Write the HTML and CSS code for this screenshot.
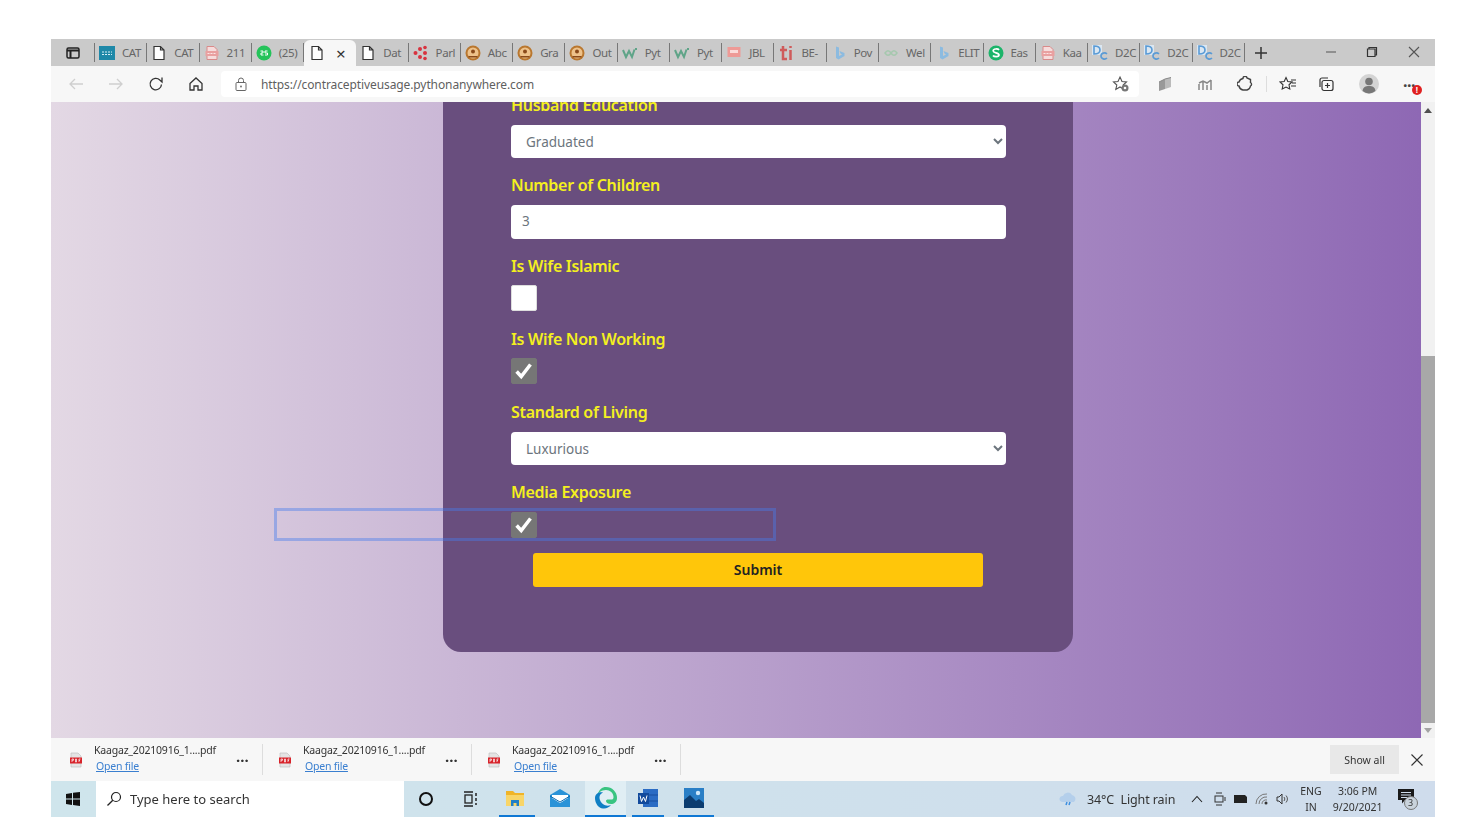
FILE: index.html
```html
<!DOCTYPE html>
<html lang="en">
<head>
  <meta charset="UTF-8" />
  <title>Contraceptive Usage</title>
  <link rel="stylesheet" href="styles.css">
</head>
<body>

  <svg class="defs" width="0" height="0">
    <symbol id="doc" viewBox="0 0 16 16"><path d="M3 1.500h6.500L13 5v9.500H3zM9.500 1.500V5H13" fill="#fff" stroke="#333" stroke-width="1.200"/></symbol>
    <symbol id="pdf" viewBox="0 0 16 16"><path d="M3 1.500h7L13 4.500v10H3z" fill="#f6dcdc" stroke="#d98a8a"/><rect x="1.500" y="6" width="13" height="5" fill="#e9a0a0"/><path d="M3.500 8.500h9" stroke="#fbe6e6" stroke-dasharray="2 1"/></symbol>
    <symbol id="face" viewBox="0 0 16 16"><circle cx="8" cy="8" r="7.500" fill="#b9772f"/><circle cx="8" cy="8" r="5.500" fill="#eec28a"/><circle cx="8" cy="6.500" r="2" fill="#8a4a1a"/><path d="M3.500 11h9v1.500h-9z" fill="#8a4a1a"/></symbol>
    <symbol id="wmark" viewBox="0 0 16 16"><path d="M1 5l3 7 3-6 3 6 2.500-7.500M14 3v2" fill="none" stroke="#5fa488" stroke-width="2"/></symbol>
    <symbol id="bing" viewBox="0 0 16 16"><path d="M5 1.500l3 1v8.500l3-1.500-1.500-1-1-2.500 5 2v3l-6 3.500-2.500-1.500z" fill="#8cbbe0"/></symbol>
    <symbol id="filepdf" viewBox="0 0 16 16"><path d="M3 1h7l3 3v11H3z" fill="#e4e4e4" stroke="#bbb" stroke-width=".6"/><rect x="2" y="5.500" width="12" height="6" fill="#d8232a"/><path d="M4 7v3M4 7h1.500v1.300H4M7.500 7v3h1V7zM11 7v3M11 7h1.500M11 8.500h1" fill="none" stroke="#fff" stroke-width=".7"/></symbol>
  </svg>

  <div class="screen">

    <div class="tabstrip">
      <div class="winbtn"><svg width="14" height="12" viewBox="0 0 14 12"><rect x="1" y="1" width="12" height="10" rx="1.500" fill="none" stroke="#222" stroke-width="1.500"/><path d="M1 3.500h12M4.500 3.500V11" stroke="#222" stroke-width="2"/></svg></div>
      <div class="tab"><svg width="16" height="16" viewBox="0 0 16 16"><rect y="1" width="16" height="14" fill="#1e88a8"/><path d="M3 7h10M3 9.500h10" stroke="#d5eef5" stroke-dasharray="2 1"/></svg><span>CAT</span></div>
      <div class="tab"><svg width="16" height="16"><use href="#doc"/></svg><span>CAT</span></div>
      <div class="tab"><svg width="16" height="16"><use href="#pdf"/></svg><span>211</span></div>
      <div class="tab"><svg width="16" height="16" viewBox="0 0 16 16"><circle cx="8" cy="8" r="7.500" fill="#25c35a"/><path d="M4.500 6h2.500v2H5v2h2.500M9 6h2.500M9 6v2h2.500v2H9" fill="none" stroke="#fff"/></svg><span>(25)</span></div>
      <div class="tab active"><svg width="16" height="16"><use href="#doc"/></svg><b>×</b></div>
      <div class="tab"><svg width="16" height="16"><use href="#doc"/></svg><span>Dat</span></div>
      <div class="tab"><svg width="16" height="16" viewBox="0 0 16 16"><g fill="#d8333f"><circle cx="2.500" cy="8" r="2"/><circle cx="7" cy="4" r="2"/><circle cx="7" cy="12" r="2"/><circle cx="12" cy="2.500" r="1.800"/><circle cx="12" cy="8" r="2"/><circle cx="12" cy="13.500" r="1.800"/></g></svg><span>Parl</span></div>
      <div class="tab"><svg width="16" height="16"><use href="#face"/></svg><span>Abc</span></div>
      <div class="tab"><svg width="16" height="16"><use href="#face"/></svg><span>Gra</span></div>
      <div class="tab"><svg width="16" height="16"><use href="#face"/></svg><span>Out</span></div>
      <div class="tab"><svg width="16" height="16"><use href="#wmark"/></svg><span>Pyt</span></div>
      <div class="tab"><svg width="16" height="16"><use href="#wmark"/></svg><span>Pyt</span></div>
      <div class="tab"><svg width="16" height="16" viewBox="0 0 16 16"><rect x="1.500" y="2" width="13" height="10" fill="#ee9a96"/><rect x="4" y="5" width="8" height="3" fill="#fbdcda"/><path d="M4 14h8" stroke="#ccc"/></svg><span>JBL</span></div>
      <div class="tab"><svg width="16" height="16" viewBox="0 0 16 16"><path d="M5 1v13h4M2 5h7M12.500 5v10M12.500 1v2" fill="none" stroke="#cf5b5b" stroke-width="2.500"/></svg><span>BE-</span></div>
      <div class="tab"><svg width="16" height="16"><use href="#bing"/></svg><span>Pov</span></div>
      <div class="tab"><svg width="16" height="16" viewBox="0 0 16 16"><path d="M2 8c2-3 4-3 6 0s4 3 6 0c-2-3-4-3-6 0s-4 3-6 0z" fill="none" stroke="#a5c8ae" stroke-width="1.500"/></svg><span>Wel</span></div>
      <div class="tab"><svg width="16" height="16"><use href="#bing"/></svg><span>ELIT</span></div>
      <div class="tab"><svg width="16" height="16" viewBox="0 0 16 16"><circle cx="8" cy="8" r="7.500" fill="#1cb46a"/><path d="M11 5c-1-1.500-6-1.500-5.800 1 .2 2.200 5.800 1.500 5.800 4 0 2.300-5 2-6 .5" fill="none" stroke="#fff" stroke-width="1.700"/></svg><span>Eas</span></div>
      <div class="tab"><svg width="16" height="16"><use href="#pdf"/></svg><span>Kaa</span></div>
      <div class="tab"><svg width="16" height="16" viewBox="0 0 16 16"><rect width="10" height="10" fill="#dbe7f2"/><path d="M2 1v8c4 0 6-1 6-4S6 1 2 1z" fill="none" stroke="#5b9bd5" stroke-width="1.600"/><path d="M15 9c-2-2-6-1-6 2s4 4 6 2" fill="none" stroke="#5b9bd5" stroke-width="1.600"/></svg><span>D2C</span></div>
      <div class="tab"><svg width="16" height="16" viewBox="0 0 16 16"><rect width="10" height="10" fill="#dbe7f2"/><path d="M2 1v8c4 0 6-1 6-4S6 1 2 1z" fill="none" stroke="#5b9bd5" stroke-width="1.600"/><path d="M15 9c-2-2-6-1-6 2s4 4 6 2" fill="none" stroke="#5b9bd5" stroke-width="1.600"/></svg><span>D2C</span></div>
      <div class="tab"><svg width="16" height="16" viewBox="0 0 16 16"><rect width="10" height="10" fill="#dbe7f2"/><path d="M2 1v8c4 0 6-1 6-4S6 1 2 1z" fill="none" stroke="#5b9bd5" stroke-width="1.600"/><path d="M15 9c-2-2-6-1-6 2s4 4 6 2" fill="none" stroke="#5b9bd5" stroke-width="1.600"/></svg><span>D2C</span></div>
      <div class="newtab"><svg width="14" height="14" viewBox="0 0 14 14"><path d="M7 1v12M1 7h12" stroke="#333" stroke-width="1.500"/></svg></div>
      <div class="wincontrols">
        <svg width="12" height="12" viewBox="0 0 12 12"><path d="M1 6h10" stroke="#555"/></svg>
        <svg width="12" height="12" viewBox="0 0 12 12"><path d="M3 3V1.500h7.500V9H9M1.500 3H9v7.500H1.500z" fill="none" stroke="#333" stroke-width="1.200"/></svg>
        <svg width="12" height="12" viewBox="0 0 12 12"><path d="M1 1l10 10M11 1L1 11" stroke="#555" stroke-width="1.100"/></svg>
      </div>
    </div>

    <div class="toolbar">
      <div class="navbtns">
        <svg width="16" height="14" viewBox="0 0 16 14"><path d="M15 7H2M7 2L2 7l5 5" fill="none" stroke="#cfcfcf" stroke-width="1.300"/></svg>
        <svg width="16" height="14" viewBox="0 0 16 14"><path d="M1 7h13M9 2l5 5-5 5" fill="none" stroke="#cfcfcf" stroke-width="1.300"/></svg>
        <svg width="16" height="16" viewBox="0 0 16 16"><path d="M13.500 8.500a5.700 5.700 0 1 1-1.700-4.500L14 6V1.500" fill="none" stroke="#333" stroke-width="1.300"/></svg>
        <svg width="16" height="16" viewBox="0 0 16 16"><path d="M2 7.500L8 2l6 5.500V14h-4v-4H6v4H2z" fill="none" stroke="#333" stroke-width="1.300"/></svg>
      </div>
      <div class="address">
        <svg width="12" height="14" viewBox="0 0 12 14"><rect x="1" y="5.500" width="10" height="8" rx="1" fill="none" stroke="#666"/><path d="M3.500 5.500V3.500a2.500 2.500 0 0 1 5 0v2" fill="none" stroke="#666"/><circle cx="6" cy="9.500" r=".9" fill="#666"/></svg>
        <span class="url">https://contraceptiveusage.pythonanywhere.com</span>
        <svg class="favstar" width="18" height="18" viewBox="0 0 18 18"><path d="M8 2l2 4.500 4.500.5-3.300 3 1 4.500L8 12l-4.200 2.500 1-4.500L1.500 7 6 6.500z" fill="none" stroke="#555" stroke-width="1.100"/><circle cx="13" cy="13" r="3.500" fill="#777"/><circle cx="13" cy="13" r="1.300" fill="#fff"/></svg>
      </div>
      <div class="tools">
        <svg width="16" height="16" viewBox="0 0 16 16"><path d="M2 6l6-3v10l-6 2z" fill="#999"/><path d="M8 3l6-1.500V11l-6 2z" fill="#bbb"/><path d="M2 6l6-3 6-1.500" fill="none" stroke="#888"/></svg>
        <svg width="16" height="16" viewBox="0 0 16 16"><path d="M2 14V8M6 14V6M10 14V9M14 14V4M2 7l4-2 4 2 4-3" fill="none" stroke="#888" stroke-width="1.500"/></svg>
        <svg width="16" height="16" viewBox="0 0 16 16"><path d="M6 2.500a2 2 0 0 1 4-.5l3.500 1.500v3a2 2 0 0 1 0 3.500A5 5 0 0 1 10 14H6a5 5 0 0 1-4-4 2 2 0 0 1 0-4 5 5 0 0 1 4-3.500z" fill="none" stroke="#444" stroke-width="1.400"/></svg>
        <i class="toolsep"></i>
        <svg class="favlist" width="18" height="16" viewBox="0 0 18 16"><path d="M7 1.500l1.800 4 4.200.5-3 2.800.8 4.200L7 11l-3.800 2 .8-4.200-3-2.800 4.200-.5zM12 4h5M13 7h4M12 10h5" fill="none" stroke="#333" stroke-width="1.100"/></svg>
        <svg width="18" height="16" viewBox="0 0 18 16"><path d="M3 11V4a2 2 0 0 1 2-2h6" fill="none" stroke="#333" stroke-width="1.200"/><rect x="5" y="4.500" width="11" height="10" rx="2" fill="none" stroke="#333" stroke-width="1.200"/><path d="M10.500 7v5M8 9.500h5" stroke="#333" stroke-width="1.200"/></svg>
        <svg width="20" height="20" viewBox="0 0 20 20"><circle cx="10" cy="10" r="10" fill="#d4d4d4"/><circle cx="10" cy="7.500" r="3.800" fill="#777"/><path d="M3.500 17c.5-4 3-5 6.500-5s6 1 6.500 5a10 10 0 0 1-13 0z" fill="#777"/></svg>
        <div class="more">
          <span class="dots">···</span>
          <span class="badge">!</span>
        </div>
      </div>
    </div>

    <div class="page">
      <div class="content">
        <div class="card">
          <form>
            <div class="field">
              <label for="husband-education">Husband Education</label>
              <select id="husband-education"><option>Graduated</option></select>
            </div>
            <div class="field">
              <label for="children">Number of Children</label>
              <input type="text" id="children" value="3" />
            </div>
            <div class="field field-high">
              <label for="wife-islamic">Is Wife Islamic</label>
              <input type="checkbox" id="wife-islamic" />
            </div>
            <div class="field field-high">
              <label for="wife-working">Is Wife Non Working</label>
              <input type="checkbox" id="wife-working" checked />
            </div>
            <div class="field">
              <label for="living">Standard of Living</label>
              <select id="living"><option>Luxurious</option></select>
            </div>
            <div class="field">
              <label for="media">Media Exposure</label>
              <input type="checkbox" id="media" checked />
            </div>
            <button type="button" class="submit">Submit</button>
          </form>
        </div>
        <div class="selection"></div>
      </div>
      <div class="scrollbar">
        <span class="arrow up"></span>
        <div class="thumb"></div>
        <span class="arrow down"></span>
      </div>
    </div>

    <div class="downloads">
      <div class="dl">
        <svg width="16" height="16"><use href="#filepdf"/></svg>
        <div class="dl-text"><span class="dl-name">Kaagaz_20210916_1....pdf</span><a href="#">Open file</a></div>
        <span class="dl-more">···</span>
      </div>
      <div class="dl">
        <svg width="16" height="16"><use href="#filepdf"/></svg>
        <div class="dl-text"><span class="dl-name">Kaagaz_20210916_1....pdf</span><a href="#">Open file</a></div>
        <span class="dl-more">···</span>
      </div>
      <div class="dl">
        <svg width="16" height="16"><use href="#filepdf"/></svg>
        <div class="dl-text"><span class="dl-name">Kaagaz_20210916_1....pdf</span><a href="#">Open file</a></div>
        <span class="dl-more">···</span>
      </div>
      <button type="button" class="showall">Show all</button>
      <svg class="dl-close" width="12" height="12" viewBox="0 0 12 12"><path d="M.5.500l11 11M11.500.500l-11 11" stroke="#333" stroke-width="1.100"/></svg>
    </div>

    <div class="taskbar">
      <div class="start"><svg width="14" height="14" viewBox="0 0 14 14"><path d="M0 2l6-1v5.500H0zM7 .8L14 0v6.500H7zM0 7.500h6V13l-6-1zM7 7.500h7V14l-7-1z" fill="#111"/></svg></div>
      <div class="search">
        <svg width="16" height="16" viewBox="0 0 16 16"><circle cx="10" cy="6" r="4.500" fill="none" stroke="#222" stroke-width="1.200"/><path d="M6.800 9.200L1.500 14.500" stroke="#222" stroke-width="1.300"/></svg>
        <span>Type here to search</span>
      </div>
      <div class="slot cortana"><svg width="16" height="16" viewBox="0 0 16 16"><circle cx="8" cy="8" r="6" fill="none" stroke="#111" stroke-width="2"/></svg></div>
      <div class="slot taskview"><svg width="18" height="16" viewBox="0 0 18 16"><path d="M2 1h9M2 15h9" stroke="#222" stroke-width="1.400"/><rect x="3" y="4" width="7" height="8" fill="none" stroke="#222" stroke-width="1.300"/><path d="M14 2v3M14 7v3M14 12v2" stroke="#222" stroke-width="1.500"/></svg></div>
      <div class="app open app-files"><svg width="20" height="20" viewBox="0 0 20 20"><path d="M1 3h7l2 2h9v3H1z" fill="#f0b428"/><rect x="1" y="7" width="18" height="11" fill="#f8d568"/><path d="M6 18v-6h8v6h-2.500v-3h-3v3z" fill="#1f7fc8"/></svg></div>
      <div class="app app-mail"><svg width="22" height="20" viewBox="0 0 22 20"><path d="M1 7l10-6 10 6v12H1z" fill="#2a93d8"/><path d="M3 7h16v3l-8 5-8-5z" fill="#fff"/><path d="M1 8l10 6 10-6" fill="none" stroke="#0f6cb0"/></svg></div>
      <div class="app open focus app-edge"><svg width="24" height="24" viewBox="0 0 24 24"><path d="M12 1a11 11 0 0 1 11 11c0 4-3 6-6 6-3.500 0-5-1.500-5-3 0-1 1-1.500 2-1.500h4c1 0 1.500-1 1.500-2.500C19.500 7 16 4 12 4 7 4 4.500 7 3.500 9 5 3.500 8 1 12 1z" fill="#39c481"/><path d="M1 12C1 7 6 5.500 9 6.500 5.500 8 5 11 6 14c1.500 4 6 7 11 5-2 2.500-5 4-8 3.500C4.500 22 1 17.500 1 12z" fill="#0f7fc4"/></svg></div>
      <div class="app open app-word"><svg width="22" height="20" viewBox="0 0 22 20"><path d="M6 1h15v18H6z" fill="#2b6cc4"/><path d="M6 7h15M6 13h15" stroke="#1a4f9e"/><rect x="1" y="5" width="11" height="11" fill="#124a9c"/><path d="M3 7.500l1.500 6 2-4.500 2 4.500 1.500-6" fill="none" stroke="#fff"/></svg></div>
      <div class="app open app-photos"><svg width="20" height="20" viewBox="0 0 20 20"><rect width="20" height="20" fill="#2a7fc6"/><path d="M0 20V12l6-5 6 6 3-2 5 4v5z" fill="#0d3d70"/><circle cx="14" cy="5" r="2.200" fill="#cfe9fb"/></svg></div>
      <div class="tray">
        <svg width="20" height="16" viewBox="0 0 20 16"><path d="M4 11a3 3 0 0 1 1-6 5 5 0 0 1 9-1 4 4 0 0 1 2 7z" fill="#b4cfeb"/><path d="M9 11l-1 3M12 11l-1 3" stroke="#3d8fe0" stroke-width="1.500"/></svg>
        <span class="weather">34°C&nbsp; Light rain</span>
        <svg class="caret" width="12" height="8" viewBox="0 0 12 8"><path d="M1 7l5-5.500L11 7" fill="none" stroke="#222" stroke-width="1.100"/></svg>
        <svg class="trayicon" width="12" height="14" viewBox="0 0 12 14"><rect x="1" y="4" width="8" height="6" fill="none" stroke="#333"/><path d="M2 1h6M2 13h6M11 5v4" stroke="#333"/></svg>
        <svg class="trayicon" width="15" height="10" viewBox="0 0 15 10"><path d="M1 1h11l2 2v6H1z" fill="#222"/></svg>
        <svg class="trayicon" width="14" height="12" viewBox="0 0 14 12"><path d="M1 11A10 10 0 0 1 12 1M4 11a7 7 0 0 1 8-7M7 11a4 4 0 0 1 5-4" fill="none" stroke="#777"/><circle cx="11" cy="10" r="1.500" fill="#333"/></svg>
        <svg class="trayicon" width="14" height="12" viewBox="0 0 14 12"><path d="M1 4h2l3-3v10L3 8H1z" fill="none" stroke="#333"/><path d="M8 4a3 3 0 0 1 0 4M10 2.500a5 5 0 0 1 0 7" fill="none" stroke="#555"/></svg>
        <div class="lang"><span>ENG</span><span>IN</span></div>
        <div class="clock"><span>3:06 PM</span><span>9/20/2021</span></div>
        <div class="notify">
          <svg width="16" height="15" viewBox="0 0 16 15"><path d="M0 0h16v11H7l-3 3.500V11H0z" fill="#1a1a1a"/><path d="M3 3.500h10M3 6h10M3 8.500h7" stroke="#cfdcec"/></svg>
          <span class="count">3</span>
        </div>
      </div>
    </div>

  </div>

</body>
</html>
```

FILE: styles.css
```css
* {
  box-sizing: border-box;
  margin: 0;
  padding: 0;
}

body {
  background-color: white;
  font-family: 'Noto Sans', 'Open Sans', sans-serif;
  padding: 39px 41px 23px 51px;
}

.defs {
  position: absolute;
}

.screen {
  width: 1384px;
  height: 778px;
  display: flex;
  flex-direction: column;
  overflow: hidden;
  filter: blur(0.4px);
}

/* tab strip */
.tabstrip {
  height: 27px;
  background-color: #cacaca;
  display: flex;
  align-items: stretch;
}

.winbtn {
  width: 44px;
  display: flex;
  align-items: center;
  padding-left: 15px;
  border-right: 1px solid #777;
  margin: 4px 0;
}

.tab {
  width: 52.27px;
  display: flex;
  align-items: center;
  padding-left: 4px;
  border-right: 1px solid #777;
  margin: 4px 0;
  overflow: hidden;
  font-size: 11.5px;
  color: #666;
  letter-spacing: -0.4px;
  flex-shrink: 0;
}

.tab svg {
  flex-shrink: 0;
}

.tab span {
  margin-left: 7px;
  white-space: nowrap;
}

.tab.active {
  background-color: #f7f7f7;
  border: none;
  border-radius: 6px 6px 0 0;
  margin: 1px 0 0;
  padding-left: 5px;
  color: #333;
}

.tab.active b {
  font-weight: 400;
  font-size: 17px;
  margin-left: 11px;
}

.newtab {
  width: 32px;
  display: flex;
  align-items: center;
  justify-content: center;
}

.wincontrols {
  flex: 1;
  display: flex;
  align-items: center;
  justify-content: space-between;
  padding: 0 15px 2px 48px;
  gap: 29px;
}

/* address row */
.toolbar {
  height: 36px;
  background-color: #f7f7f7;
  display: flex;
  align-items: center;
}

.navbtns {
  width: 170px;
  display: flex;
  align-items: center;
  gap: 24px;
  padding-left: 17px;
}

.address {
  width: 918px;
  height: 26px;
  background-color: white;
  border-radius: 4px;
  display: flex;
  align-items: center;
  padding: 0 9px 0 14px;
  gap: 14px;
}

.url {
  font-size: 12px;
  color: #5f5f5f;
  flex: 1;
  letter-spacing: -0.1px;
}

.tools {
  flex: 1;
  display: flex;
  align-items: center;
  padding-left: 18px;
}

.tools svg {
  margin-right: 24px;
  flex-shrink: 0;
}

.tools svg.favlist {
  margin-right: 20px;
}

.toolsep {
  width: 1px;
  height: 16px;
  background-color: #ddd;
  margin: 0 12px 0 -11px;
}

.more {
  position: relative;
  width: 28px;
  height: 20px;
}

.dots {
  font-size: 16px;
  font-weight: 700;
  color: #444;
  line-height: 16px;
  letter-spacing: -0.5px;
}

.badge {
  position: absolute;
  left: 9px;
  top: 11px;
  width: 10px;
  height: 10px;
  border-radius: 50%;
  background-color: #e02020;
  color: white;
  font-size: 8px;
  font-weight: 700;
  line-height: 10px;
  text-align: center;
}

/* page area */
.page {
  height: 636px;
  display: flex;
  overflow: hidden;
}

.content {
  width: 1370px;
  position: relative;
  background: linear-gradient(to right, #e3d8e4, #8e68b4);
  overflow: hidden;
}

.card {
  width: 630px;
  margin: -40px 0 0 392px;
  padding: 31px 67px 65px 68px;
  background-color: #694e7e;
  border-radius: 18px;
}

.field {
  margin-bottom: 15px;
}

.field-high {
  padding-bottom: 1px;
}

label {
  display: block;
  height: 24px;
  line-height: 24px;
  margin-bottom: 8px;
  color: #f4f01e;
  font-size: 16px;
  font-weight: 600;
  letter-spacing: -0.3px;
}

.field-high label {
  margin-bottom: 7px;
}

select,
input[type=text] {
  display: block;
  width: 495px;
  height: 33px;
  padding: 0 11px;
  border: none;
  border-radius: 4px;
  background-color: white;
  color: #6c757d;
  font-family: 'Noto Sans', 'Open Sans', sans-serif;
  font-size: 13.5px;
}

input[type=text] {
  height: 34px;
  padding-bottom: 2px;
}

input[type=checkbox] {
  display: block;
  appearance: none;
  width: 26px;
  height: 26px;
  background-color: white;
  border: 1px solid #ddd;
  border-radius: 2px;
}

input[type=checkbox]:checked {
  background-color: #767676;
  border-color: #767676;
  background-image: url("data:image/svg+xml,%3Csvg xmlns='http://www.w3.org/2000/svg' viewBox='0 0 26 26'%3E%3Cpath d='M5 13.500l5 5.500 10-13' fill='none' stroke='white' stroke-width='3.800'/%3E%3C/svg%3E");
}

.submit {
  display: block;
  width: 450px;
  height: 34px;
  margin-left: 22px;
  padding-bottom: 2px;
  background-color: #ffc60a;
  color: #222;
  border: none;
  border-radius: 3px;
  font-family: 'Noto Sans', 'Open Sans', sans-serif;
  font-size: 14px;
  font-weight: 600;
}

.selection {
  position: absolute;
  left: 223px;
  top: 406px;
  width: 502px;
  height: 33px;
  border: 3px solid rgba(70, 125, 235, 0.42);
}

.scrollbar {
  width: 14px;
  background-color: #f1f1f1;
  display: flex;
  flex-direction: column;
  align-items: center;
  justify-content: space-between;
  padding-top: 6px;
  position: relative;
}

.arrow {
  width: 0;
  height: 0;
  border-left: 4px solid transparent;
  border-right: 4px solid transparent;
}

.arrow.up {
  border-bottom: 5px solid #505050;
}

.arrow.down {
  border-top: 5px solid #a3a3a3;
  margin-bottom: 5px;
}

.thumb {
  position: absolute;
  top: 254px;
  left: 0;
  width: 14px;
  height: 367px;
  background-color: #a8a8a8;
}

/* downloads bar */
.downloads {
  height: 43px;
  background-color: #f7f7f7;
  display: flex;
  align-items: center;
  padding-left: 17px;
}

.dl {
  width: 195px;
  height: 31px;
  display: flex;
  align-items: center;
  border-right: 1px solid #ddd;
  margin-right: 14px;
  flex-shrink: 0;
}

.dl svg {
  flex-shrink: 0;
}

.dl-text {
  width: 132px;
  margin-left: 10px;
  padding-bottom: 4px;
  display: flex;
  flex-direction: column;
  font-size: 10.5px;
  line-height: 16px;
  color: #333;
  letter-spacing: -0.2px;
}

.dl-name {
  white-space: nowrap;
}

.dl-text a {
  color: #3a7fd0;
  margin-left: 2px;
}

.dl-more {
  font-size: 15px;
  font-weight: 700;
  color: #333;
  margin-left: 10px;
}

.showall {
  width: 69px;
  height: 29px;
  margin-left: 635px;
  background-color: #e8e8e8;
  border: none;
  font-family: 'Noto Sans', 'Open Sans', sans-serif;
  font-size: 10.5px;
  color: #333;
}

.dl-close {
  margin-left: 12px;
}

/* windows taskbar */
.taskbar {
  height: 36px;
  background: linear-gradient(to right, #cfe5ec, #cfe1ec 50%, #cfdcec);
  display: flex;
  align-items: stretch;
}

.start {
  width: 45px;
  display: flex;
  align-items: center;
  padding-left: 15px;
}

.search {
  width: 308px;
  background-color: white;
  display: flex;
  align-items: center;
  padding-left: 10px;
  gap: 8px;
  font-size: 13px;
  color: #333;
}

.slot {
  display: flex;
  align-items: center;
  justify-content: center;
}

.cortana {
  width: 44px;
}

.taskview {
  width: 46px;
}

.app {
  display: flex;
  align-items: center;
  justify-content: center;
  border-bottom: 2px solid transparent;
}

.app.open {
  border-bottom-color: #0f78d4;
}

.app.focus {
  background-color: #e0eef4;
}

.app-files {
  width: 36px;
  margin-left: 5px;
  padding-right: 4px;
}

.app-mail {
  width: 44px;
  margin-left: 3px;
}

.app-edge {
  width: 41px;
  margin-left: 3px;
}

.app-word {
  width: 32px;
  margin-left: 6px;
}

.app-photos {
  width: 36px;
  margin-left: 14px;
  padding-right: 4px;
}

.tray {
  flex: 1;
  display: flex;
  align-items: center;
  padding-left: 344px;
  font-size: 12.5px;
  color: #333;
}

.weather {
  margin-left: 9px;
  white-space: nowrap;
  letter-spacing: -0.1px;
}

.caret {
  margin-left: 16px;
}

.trayicon {
  margin-left: 7px;
}

.caret + .trayicon {
  margin-left: 11px;
}

.lang,
.clock {
  display: flex;
  flex-direction: column;
  align-items: center;
  font-size: 10.5px;
  line-height: 16px;
}

.lang {
  margin-left: 10px;
}

.clock {
  margin-left: 11px;
}

.notify {
  position: relative;
  margin-left: 15px;
  width: 18px;
  height: 20px;
}

.count {
  position: absolute;
  left: 6px;
  top: 7px;
  width: 14px;
  height: 14px;
  border-radius: 50%;
  background-color: #c9d3dc;
  border: 1px solid #777;
  font-size: 9px;
  line-height: 12px;
  text-align: center;
}
```
